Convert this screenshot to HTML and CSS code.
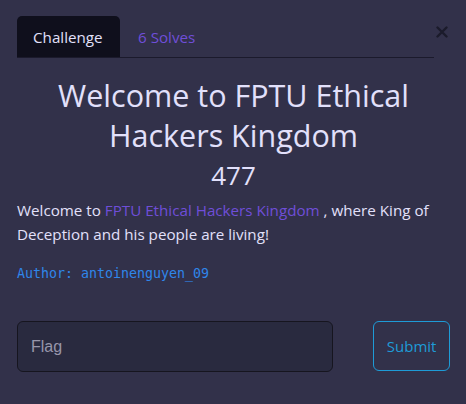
FILE: index.html
```html
<!DOCTYPE html>
<html>
<head>
<meta charset="utf-8">
<link rel="stylesheet" href="styles.css">
</head>
<body>
<div class="modal">
  <div class="head">
    <div class="tabs">
      <div class="tab active">Challenge</div>
      <div class="tab">6 Solves</div>
    </div>
    <div class="close"><svg width="12" height="12" viewBox="0 0 12 12"><path d="M1.5 1.5 L10.5 10.5 M10.5 1.5 L1.5 10.5" stroke="#1b1b2b" stroke-width="2.4" stroke-linecap="round"/></svg></div>
  </div>
  <h1 class="title">Welcome to FPTU Ethical Hackers Kingdom</h1>
  <div class="value">477</div>
  <p class="desc">Welcome to <span class="link">FPTU Ethical Hackers Kingdom</span> , where King of Deception and his people are living!</p>
  <div class="author">Author: antoinenguyen_09</div>
  <div class="form">
    <div class="input">Flag</div>
    <div class="btn">Submit</div>
  </div>
</div>
</body>
</html>
```
FILE: styles.css
```css
html, body {
  margin: 0;
  padding: 0;
  background: #32314a;
  width: 466px;
  height: 404px;
  overflow: hidden;
}
.modal {
  padding: 16px 16px 0 17px;
  font-family: "Open Sans", "Noto Sans", sans-serif;
  color: #e2e0fb;
}
.head {
  display: flex;
  align-items: flex-start;
}
.tabs {
  display: flex;
  width: 417px;
  border-bottom: 1px solid #1b1a2c;
}
.tab {
  height: 41px;
  box-sizing: border-box;
  padding: 0 16px;
  display: flex;
  align-items: center;
  font-size: 15.2px;
  color: #6f4ed8;
}
.tab.active {
  background: #0f0f1c;
  border-radius: 5px 5px 0 0;
  color: #e2e0fb;
  width: 103px;
  margin-right: 2px;
}
.close {
  margin-left: 1px;
  margin-top: 9px;
  width: 14px;
  height: 14px;
  display: flex;
  align-items: center;
  justify-content: center;
}
.title {
  margin: 17px 0 0;
  text-align: center;
  font-weight: 400;
  font-size: 30.5px;
  line-height: 40px;
  padding: 0 30px;
}
.value {
  text-align: center;
  font-size: 26px;
  line-height: 34px;
  margin-top: 3px;
}
.desc {
  margin: 6px 0 0;
  font-size: 15.2px;
  line-height: 24px;
}
.link {
  color: #6f4ed8;
}
.author {
  margin-top: 20px;
  font-family: "DejaVu Sans Mono", "Liberation Mono", monospace;
  font-size: 13.3px;
  color: #2f86ea;
  line-height: 16px;
}
.form {
  margin-top: 39px;
  display: flex;
  align-items: flex-start;
}
.input {
  width: 317px;
  height: 51px;
  box-sizing: border-box;
  background: #292a3f;
  border: 1px solid #16151f;
  border-radius: 6px;
  padding: 0 13px;
  display: flex;
  align-items: center;
  font-family: "Liberation Sans", Arial, sans-serif;
  font-size: 16px;
  color: #9896ab;
}
.btn {
  margin-left: 40px;
  width: 77px;
  height: 50px;
  box-sizing: border-box;
  border: 1px solid #1e9bd7;
  border-radius: 6px;
  display: flex;
  align-items: center;
  justify-content: center;
  font-size: 15px;
  color: #1e9bd7;
}
```
